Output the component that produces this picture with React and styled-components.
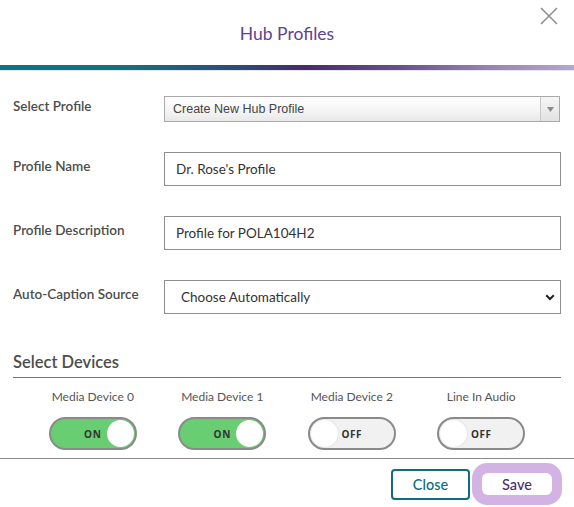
import React, { useState } from "react";
import styled, { createGlobalStyle } from "styled-components";

const GlobalStyle = createGlobalStyle`
  body {
    margin: 0;
    background: #fff;
    font-family: Lato, "Open Sans", sans-serif;
  }
`;

const devices = [
  { name: "Media Device 0", on: true },
  { name: "Media Device 1", on: true },
  { name: "Media Device 2", on: false },
  { name: "Line In Audio", on: false },
];

const App = () => {
  const [toggles, setToggles] = useState(devices.map((d) => d.on));

  const flip = (i) => {
    setToggles(toggles.map((t, idx) => (idx === i ? !t : t)));
  };

  return (
    <Modal>
      <GlobalStyle />
      <Header>
        <Title>Hub Profiles</Title>
        <CloseIcon aria-label="close">
          <svg width="18" height="18" viewBox="0 0 18 18">
            <path d="M1 1 L17 17 M17 1 L1 17" stroke="#8c8c8c" strokeWidth="1.5" fill="none" />
          </svg>
        </CloseIcon>
      </Header>
      <GradientBar />

      <Body>
        <FormGrid>
          <Label $top={2}>Select Profile</Label>
          <ProfileSelect>
            <span>Create New Hub Profile</span>
            <ArrowBox>
              <svg width="7" height="5" viewBox="0 0 7 5">
                <path d="M0 0 H7 L3.5 5 Z" fill="#8a8a8a" />
              </svg>
            </ArrowBox>
          </ProfileSelect>

          <Label>Profile Name</Label>
          <Input defaultValue="Dr. Rose's Profile" />

          <Label>Profile Description</Label>
          <Input defaultValue="Profile for POLA104H2" />

          <Label>Auto-Caption Source</Label>
          <CaptionSelect>
            <span>Choose Automatically</span>
            <svg width="10" height="7" viewBox="0 0 10 7">
              <path d="M1.2 1.2 L5 5 L8.8 1.2" stroke="#222" strokeWidth="2" fill="none" />
            </svg>
          </CaptionSelect>
        </FormGrid>

        <SectionTitle>Select Devices</SectionTitle>
        <DeviceRow>
          {devices.map((d, i) => (
            <Device key={d.name}>
              <DeviceName>{d.name}</DeviceName>
              <Toggle $on={toggles[i]} onClick={() => flip(i)}>
                <ToggleText>{toggles[i] ? "ON" : "OFF"}</ToggleText>
                <Knob $on={toggles[i]} />
              </Toggle>
            </Device>
          ))}
        </DeviceRow>
      </Body>

      <Footer>
        <CloseButton>Close</CloseButton>
        <SaveButton>Save</SaveButton>
      </Footer>
    </Modal>
  );
};

const Modal = styled.div`
  width: 574px;
  height: 507px;
  background: #fff;
  overflow: hidden;
`;

const Header = styled.div`
  position: relative;
  height: 65px;
  display: flex;
  align-items: center;
  justify-content: center;
`;

const Title = styled.h1`
  margin: 2px 0 0;
  font-size: 17.5px;
  font-weight: 400;
  color: #5e4391;
`;

const CloseIcon = styled.div`
  position: absolute;
  top: 7px;
  right: 16px;
  width: 18px;
  height: 18px;
  cursor: pointer;
`;

const GradientBar = styled.div`
  height: 5px;
  background: linear-gradient(
    90deg,
    #0b7386 0%,
    #137082 22%,
    #2d4a78 42%,
    #472a6b 53%,
    #6b5090 70%,
    #9783b2 85%,
    #b5a7cd 100%
  );
  border-bottom: 1px solid #e6e6e6;
`;

const Body = styled.div`
  padding: 25px 13px 0 13px;
`;

const FormGrid = styled.div`
  display: grid;
  grid-template-columns: 151px 1fr;
  row-gap: 30px;
  align-items: start;
`;

const Label = styled.div`
  font-size: 13.5px;
  font-weight: 600;
  color: #4d4d4d;
  padding-top: ${(p) => (p.$top !== undefined ? p.$top : 6)}px;
  line-height: 16px;
`;

const ProfileSelect = styled.div`
  height: 26px;
  box-sizing: border-box;
  border: 1px solid #aaa;
  background: linear-gradient(#ffffff 0%, #f4f4f4 60%, #e8e8e8 100%);
  display: flex;
  align-items: center;
  justify-content: space-between;
  font-family: "Liberation Sans", Arial, sans-serif;
  font-size: 12.5px;
  color: #444;
  padding-left: 8px;
  margin-right: 1px;
`;

const ArrowBox = styled.div`
  width: 18px;
  height: 100%;
  border-left: 1px solid #c8c8c8;
  display: flex;
  align-items: center;
  justify-content: center;
  background: linear-gradient(#f6f6f6, #e2e2e2);
`;

const Input = styled.input`
  height: 34px;
  box-sizing: border-box;
  border: 1px solid #8e8e8e;
  border-radius: 0;
  padding: 0 11px;
  font-family: Lato, "Open Sans", sans-serif;
  font-size: 13.5px;
  color: #333;
  outline: none;
`;

const CaptionSelect = styled.div`
  height: 34px;
  box-sizing: border-box;
  border: 1px solid #8e8e8e;
  display: flex;
  align-items: center;
  justify-content: space-between;
  padding: 0 5px 0 16px;
  font-size: 13.5px;
  color: #333;
`;

const SectionTitle = styled.h2`
  margin: 38px 0 0;
  font-size: 16.5px;
  font-weight: 600;
  color: #4d4d4d;
  line-height: 20px;
  padding-bottom: 5px;
  border-bottom: 1px solid #777;
`;

const DeviceRow = styled.div`
  display: flex;
  justify-content: center;
  padding-top: 11px;
  padding-bottom: 8px;
`;

const Device = styled.div`
  width: 129.5px;
  display: flex;
  flex-direction: column;
  align-items: center;
`;

const DeviceName = styled.div`
  font-size: 12px;
  color: #555;
  line-height: 16px;
  margin-bottom: 12px;
`;

const Toggle = styled.div`
  position: relative;
  width: 88px;
  height: 33px;
  box-sizing: border-box;
  border: 2px solid #8a8a8a;
  border-radius: 17px;
  background: ${(p) => (p.$on ? "#69cd72" : "#f1f1f1")};
  display: flex;
  align-items: center;
  justify-content: center;
  cursor: pointer;
`;

const ToggleText = styled.span`
  font-family: "Open Sans", sans-serif;
  font-size: 10px;
  font-weight: 700;
  letter-spacing: 0.6px;
  color: #333;
`;

const Knob = styled.div`
  position: absolute;
  top: 1px;
  ${(p) => (p.$on ? "right: 1px;" : "left: 1px;")}
  width: 27px;
  height: 27px;
  border-radius: 50%;
  background: #fff;
  box-shadow: ${(p) => (p.$on ? "none" : "0 0 2px rgba(0,0,0,0.15)")};
`;

const Footer = styled.div`
  border-top: 1px solid #8a8a8a;
  display: flex;
  justify-content: flex-end;
  align-items: center;
  gap: 12px;
  padding: 10px 22px 0 0;
`;

const BaseButton = styled.button`
  height: 31px;
  box-sizing: border-box;
  border-radius: 4px;
  background: #fff;
  font-family: Lato, "Open Sans", sans-serif;
  font-size: 14.5px;
  font-weight: 500;
  cursor: pointer;
`;

const CloseButton = styled(BaseButton)`
  width: 79px;
  border: 2px solid #0d6e80;
  color: #0d6e80;
`;

const SaveButton = styled(BaseButton)`
  width: 70px;
  height: 22px;
  margin: 0 0 1px;
  border: none;
  color: #4b2b70;
  border-radius: 6px;
  box-shadow: 0 0 0 10px #d3b3e4;
`;

export default App;
